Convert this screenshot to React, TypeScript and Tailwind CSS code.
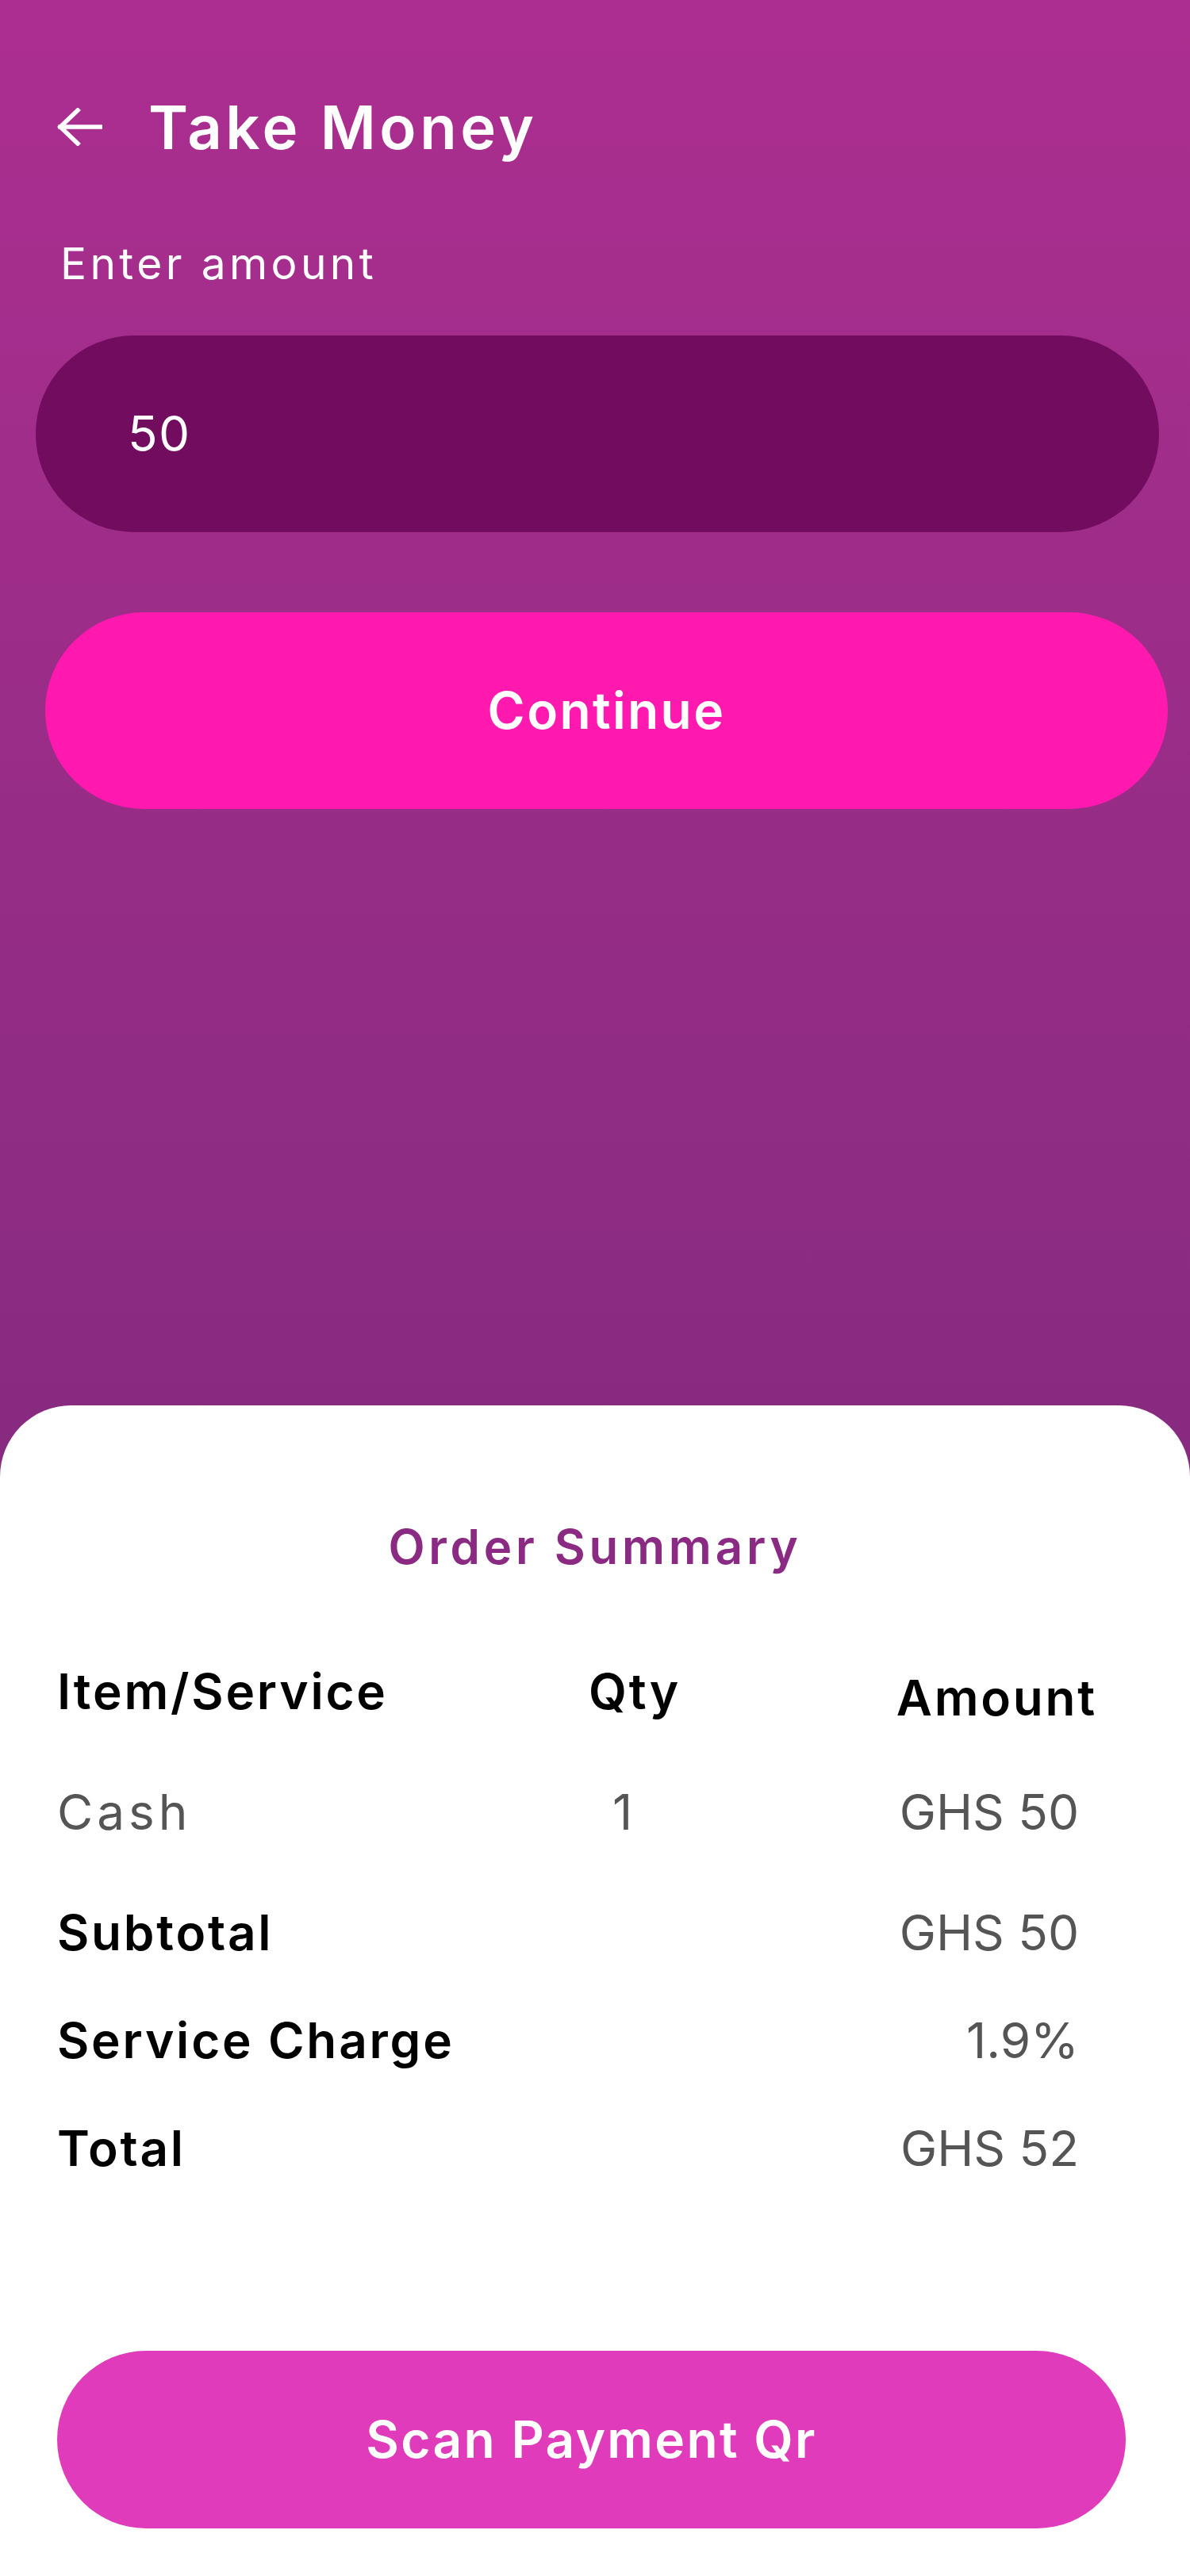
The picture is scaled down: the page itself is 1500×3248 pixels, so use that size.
import React from "react";

// ─── SHARED ──────────────────────────────────────────────────────────────────

function BackArrow() {
	return (
		<svg width="58" height="48" viewBox="0 0 58 48" fill="none" aria-hidden>
			<path
				d="M27 3 5 24l22 21M5 24h51"
				stroke="white"
				strokeWidth="5.5"
				strokeLinecap="square"
				strokeLinejoin="miter"
			/>
		</svg>
	);
}

const rows = [
	{ label: "Subtotal", value: "GHS 50" },
	{ label: "Service Charge", value: "1.9%" },
	{ label: "Total", value: "GHS 52" },
];

// ─── PAGE ────────────────────────────────────────────────────────────────────

export default function App() {
	return (
		<div className="flex h-[3248px] w-[1500px] flex-col bg-[#872a80] font-['Inter','Liberation_Sans',sans-serif]">
			{/* Top: amount entry */}
			<div className="flex h-[1772px] flex-none flex-col bg-gradient-to-b from-[#ac2e90] to-[#882b80] pt-[115px]">
				<div className="flex h-[90px] items-center">
					<div className="ml-[71px] flex w-[116px] items-center">
						<BackArrow />
					</div>
					<h1 className="text-[76px] font-semibold leading-[90px] tracking-[0.06em] text-white">
						Take Money
					</h1>
				</div>

				<p className="ml-[76px] mt-[92px] text-[55px] leading-[70px] tracking-[0.08em] text-white">
					Enter amount
				</p>

				<div className="ml-[45px] mt-[56px] flex h-[248px] w-[1416px] items-center rounded-full bg-[#720c5f] pl-[116px]">
					<span className="text-[62px] leading-[80px] tracking-[0.02em] text-white">50</span>
				</div>

				<button className="ml-[57px] mt-[101px] flex h-[248px] w-[1415px] items-center justify-center rounded-full bg-[#ff19ae] text-[64px] font-semibold leading-[80px] tracking-[0.037em] text-white">
					Continue
				</button>
			</div>

			{/* Bottom sheet: order summary */}
			<div className="flex flex-1 flex-col rounded-t-[90px] bg-white pt-[138px]">
				<h2 className="text-center text-[60px] font-semibold leading-[80px] tracking-[0.08em] text-[#8b2a82]">
					Order Summary
				</h2>

				<div className="ml-[72px] mt-[103px] flex h-[80px] w-[1311px] items-start text-[62px] font-semibold leading-[80px] tracking-[0.045em] text-black">
					<span className="w-[670px]">Item/Service</span>
					<span>Qty</span>
					<span className="ml-auto mt-[8px]">Amount</span>
				</div>

				<div className="ml-[72px] mt-[72px] flex h-[80px] w-[1311px] items-center text-[62px] leading-[80px] text-[#555555]">
					<span className="w-[670px] tracking-[0.08em]">Cash</span>
					<span className="pl-[30px]">1</span>
					<span className="ml-auto pr-[23px]">GHS 50</span>
				</div>

				<div className="ml-[72px] mt-[72px] flex w-[1311px] flex-col gap-[56px]">
					{rows.map((row) => (
						<div key={row.label} className="flex h-[80px] items-center justify-between leading-[80px]">
							<span className="text-[62px] font-semibold tracking-[0.045em] text-black">{row.label}</span>
							<span className="pr-[23px] text-[62px] text-[#555555]">{row.value}</span>
						</div>
					))}
				</div>

				<button className="ml-[72px] mt-[215px] flex h-[224px] w-[1347px] items-center justify-center rounded-full bg-[#e03bba] text-[64px] font-semibold leading-[80px] tracking-[0.036em] text-white">
					Scan Payment Qr
				</button>
			</div>
		</div>
	);
}
